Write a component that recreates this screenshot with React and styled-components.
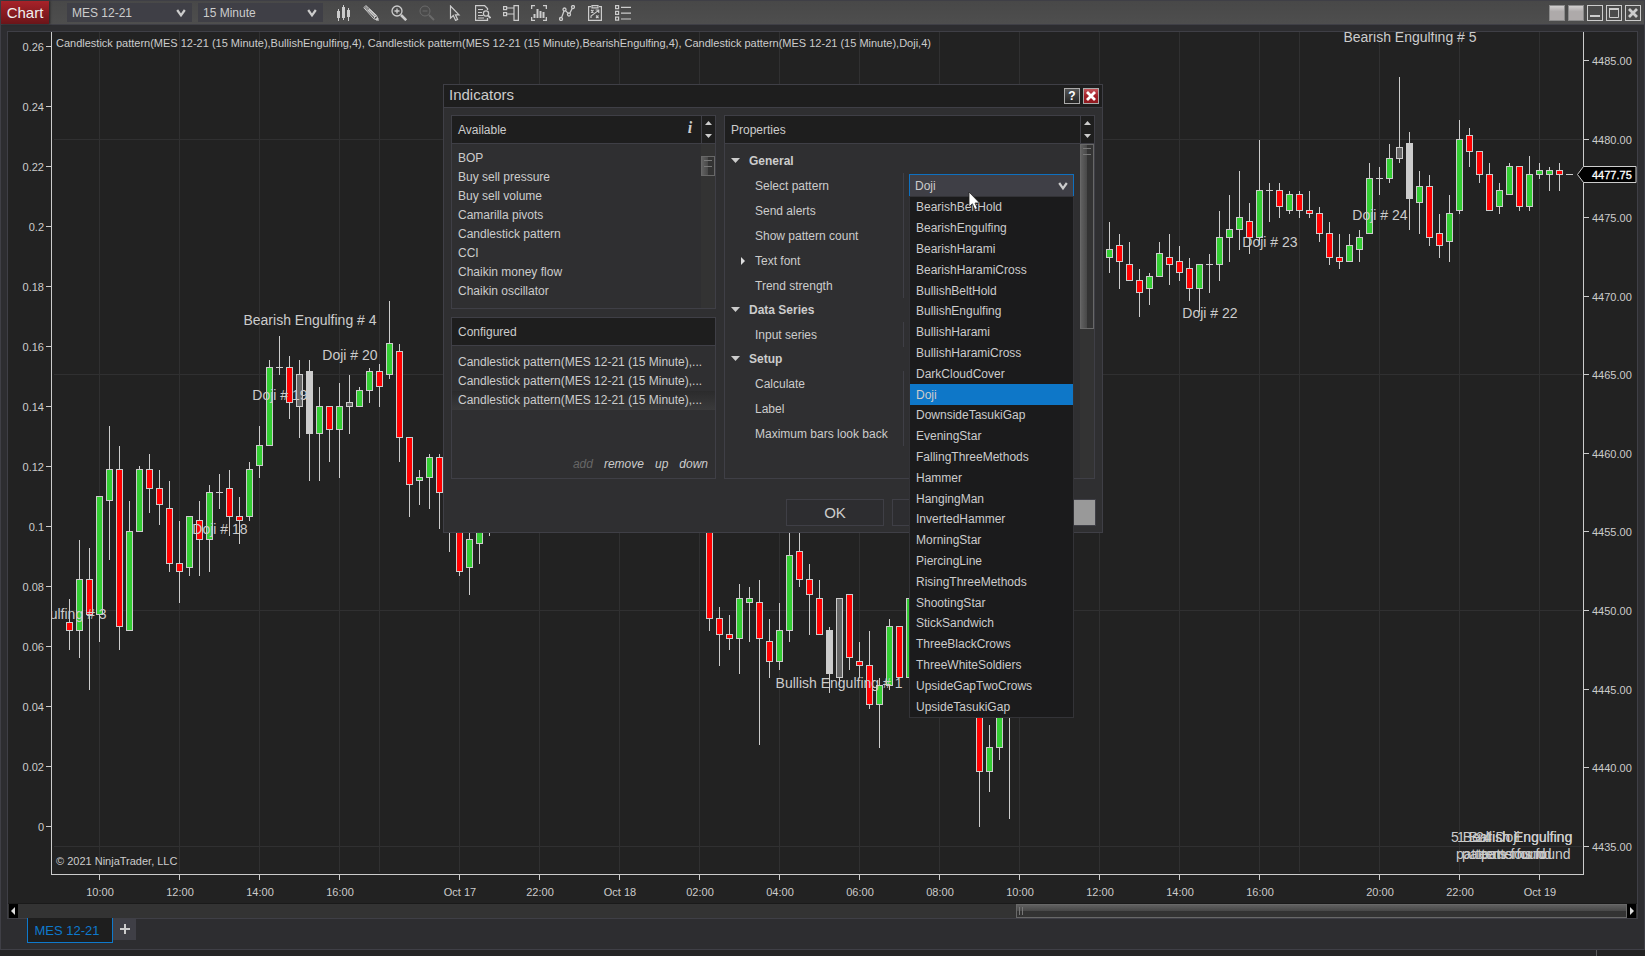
import React from 'react'
import styled, { createGlobalStyle, css } from 'styled-components'

const GlobalStyle = createGlobalStyle`
    * {
        box-sizing: border-box;
    }
    body {
        margin: 0;
        background: #222222;
        color: #cccccc;
        font-family: "Liberation Sans", Arial, sans-serif;
        font-size: 12px;
    }
    button, select, input {
        font: inherit;
        color: inherit;
        margin: 0;
        padding: 0;
        border: 0;
        border-radius: 0;
        background: none;
        appearance: none;
        outline: none;
    }
    svg {
        display: block;
    }
`;

// x, high, body top, body bottom, low, kind
// g = up, r = down, n = pattern outline, w = pattern filled, d = open equals close
const candles = [
    [69, 599, 622, 631, 650, 'r'], [79, 540, 579, 631, 658, 'g'], [89, 548, 579, 615, 690, 'r'],
    [99, 496, 496, 615, 642, 'g'], [109, 426, 469, 501, 560, 'g'], [119, 446, 469, 627, 650, 'r'],
    [129, 501, 531, 631, 631, 'g'], [139, 466, 469, 532, 532, 'g'], [149, 454, 469, 489, 513, 'r'],
    [159, 470, 488, 505, 525, 'r'], [169, 481, 508, 564, 572, 'r'], [179, 521, 563, 572, 603, 'r'],
    [189, 516, 516, 568, 576, 'g'], [199, 501, 520, 540, 576, 'r'], [209, 485, 492, 540, 572, 'g'],
    [219, 474, 492, 493, 509, 'd'], [229, 470, 488, 517, 536, 'r'], [239, 497, 516, 521, 544, 'r'],
    [249, 462, 469, 517, 521, 'g'], [259, 426, 445, 466, 478, 'g'], [269, 360, 367, 446, 446, 'g'],
    [279, 336, 367, 368, 375, 'd'], [289, 356, 367, 403, 419, 'r'], [299, 360, 374, 407, 438, 'n'],
    [309, 360, 371, 434, 481, 'w'], [319, 387, 406, 434, 481, 'g'], [329, 406, 406, 430, 462, 'r'],
    [339, 383, 406, 430, 478, 'g'], [349, 375, 402, 407, 434, 'n'], [359, 387, 390, 407, 407, 'g'],
    [369, 368, 371, 391, 403, 'g'], [379, 364, 371, 387, 407, 'r'], [389, 301, 343, 375, 379, 'g'],
    [399, 344, 351, 438, 462, 'r'], [409, 437, 437, 485, 517, 'r'], [419, 470, 477, 481, 505, 'g'],
    [429, 454, 457, 478, 509, 'g'], [439, 454, 457, 493, 529, 'r'], [449, 480, 490, 520, 552, 'r'],
    [459, 500, 510, 572, 576, 'r'], [469, 520, 539, 568, 595, 'g'], [479, 500, 510, 544, 564, 'g'],
    [489, 490, 500, 520, 536, 'g'],
    [709, 480, 490, 619, 631, 'r'], [719, 607, 618, 635, 666, 'r'], [729, 615, 634, 639, 650, 'r'],
    [739, 584, 598, 639, 674, 'g'], [749, 587, 598, 603, 642, 'g'], [759, 580, 602, 639, 745, 'r'],
    [769, 619, 641, 662, 678, 'r'], [779, 603, 630, 662, 670, 'g'], [789, 500, 555, 631, 642, 'g'],
    [799, 500, 551, 580, 587, 'r'], [809, 564, 579, 595, 635, 'r'], [819, 580, 598, 635, 635, 'r'],
    [829, 627, 630, 674, 693, 'w'], [839, 598, 598, 678, 685, 'n'], [849, 594, 594, 658, 670, 'r'],
    [859, 642, 661, 666, 678, 'r'], [869, 631, 665, 705, 709, 'r'], [879, 678, 685, 705, 748, 'g'],
    [889, 619, 626, 686, 690, 'g'], [899, 626, 626, 678, 678, 'r'], [909, 591, 598, 678, 678, 'g'],
    [979, 690, 700, 772, 827, 'r'], [989, 725, 747, 772, 792, 'g'], [999, 690, 700, 748, 760, 'g'],
    [1009, 690, 700, 710, 819, 'r'],
    [1109, 222, 249, 258, 273, 'g'], [1119, 234, 245, 262, 289, 'r'], [1129, 242, 264, 281, 281, 'r'],
    [1139, 269, 280, 293, 317, 'r'], [1149, 273, 276, 289, 305, 'g'], [1159, 242, 253, 277, 277, 'g'],
    [1169, 234, 257, 265, 285, 'r'], [1179, 246, 261, 273, 281, 'r'], [1189, 258, 268, 289, 301, 'r'],
    [1199, 264, 264, 289, 312, 'g'], [1209, 254, 264, 265, 293, 'd'], [1219, 211, 237, 265, 281, 'g'],
    [1229, 195, 229, 238, 262, 'g'], [1239, 171, 217, 230, 250, 'g'], [1249, 203, 221, 238, 254, 'r'],
    [1259, 140, 190, 238, 245, 'g'], [1269, 183, 190, 191, 222, 'd'], [1279, 183, 190, 207, 218, 'r'],
    [1289, 191, 194, 211, 214, 'g'], [1299, 191, 194, 211, 218, 'r'], [1309, 191, 210, 214, 218, 'r'],
    [1319, 207, 213, 234, 242, 'r'], [1329, 222, 233, 258, 265, 'r'], [1339, 234, 257, 262, 269, 'r'],
    [1349, 234, 245, 262, 262, 'g'], [1359, 230, 237, 250, 262, 'g'], [1369, 163, 178, 234, 234, 'g'],
    [1379, 167, 178, 179, 195, 'd'], [1389, 144, 158, 179, 183, 'g'], [1399, 77, 147, 159, 163, 'n'],
    [1409, 132, 143, 199, 230, 'w'], [1419, 171, 186, 203, 234, 'g'], [1429, 175, 186, 238, 246, 'r'],
    [1439, 214, 233, 246, 258, 'r'], [1449, 195, 213, 242, 262, 'g'], [1459, 120, 139, 211, 214, 'g'],
    [1469, 128, 135, 152, 167, 'r'], [1479, 151, 151, 175, 183, 'r'], [1489, 163, 174, 211, 211, 'r'],
    [1499, 183, 190, 207, 214, 'g'], [1509, 163, 166, 195, 195, 'g'], [1519, 166, 166, 207, 211, 'r'],
    [1529, 156, 174, 207, 211, 'g'], [1539, 163, 170, 175, 179, 'g'], [1549, 167, 170, 175, 191, 'g'],
    [1559, 163, 170, 175, 191, 'r'], [1569, 174, 174, 175, 175, 'd'],
];

const candleFill = { g: '#33cc33', r: '#ff0000', n: '#666666', w: '#cccccc' };

const times = [
    [99, '10:00'], [179, '12:00'], [259, '14:00'], [339, '16:00'], [379, ''], [459, 'Oct 17'],
    [539, '22:00'], [619, 'Oct 18'], [699, '02:00'], [779, '04:00'], [859, '06:00'],
    [939, '08:00'], [1019, '10:00'], [1099, '12:00'], [1179, '14:00'], [1259, '16:00'],
    [1299, ''], [1379, '20:00'], [1459, '22:00'], [1539, 'Oct 19'],
];

const prices = [
    [61, '4485.00'], [140, '4480.00'], [218, '4475.00'], [297, '4470.00'], [375, '4465.00'],
    [454, '4460.00'], [532, '4455.00'], [611, '4450.00'], [690, '4445.00'], [768, '4440.00'],
    [847, '4435.00'],
];

const ratios = ['0.26', '0.24', '0.22', '0.2', '0.18', '0.16', '0.14', '0.12', '0.1', '0.08', '0.06', '0.04', '0.02', '0'];

const notes = [
    [40, 619, 'Bearish Engulfing # 3'],
    [220, 534, 'Doji # 18'],
    [280, 400, 'Doji # 19'],
    [310, 325, 'Bearish Engulfing # 4'],
    [350, 360, 'Doji # 20'],
    [839, 688, 'Bullish Engulfing # 1'],
    [1210, 318, 'Doji # 22'],
    [1270, 247, 'Doji # 23'],
    [1380, 220, 'Doji # 24'],
    [1410, 42, 'Bearish Engulfing # 5'],
];

const totals = [
    [1451, '5 Bearish Engulfing'],
    [1457, '1 Bullish Engulfing'],
    [1476, '24 Doji'],
];

const available = ['BOP', 'Buy sell pressure', 'Buy sell volume', 'Camarilla pivots', 'Candlestick pattern', 'CCI', 'Chaikin money flow', 'Chaikin oscillator'];

const patterns = [
    'BearishBeltHold', 'BearishEngulfing', 'BearishHarami', 'BearishHaramiCross', 'BullishBeltHold',
    'BullishEngulfing', 'BullishHarami', 'BullishHaramiCross', 'DarkCloudCover', 'Doji',
    'DownsideTasukiGap', 'EveningStar', 'FallingThreeMethods', 'Hammer', 'HangingMan',
    'InvertedHammer', 'MorningStar', 'PiercingLine', 'RisingThreeMethods', 'ShootingStar',
    'StickSandwich', 'ThreeBlackCrows', 'ThreeWhiteSoldiers', 'UpsideGapTwoCrows', 'UpsideTasukiGap',
];

const Page = styled.div`
    position: relative;
    min-height: 100vh;
    display: flex;
    flex-direction: column;
    overflow: hidden;
`;

const Window = styled.div`
    background: #2d2d30;
    border: 1px solid #3f3f46;
`;

const TitleBar = styled.header`
    display: flex;
    align-items: center;
    height: 24px;
    padding-right: 3px;
    background: linear-gradient(#484848, #4e4e4e);
    border-bottom: 1px solid #3f3f46;
`;

const ChartMenu = styled.button`
    align-self: stretch;
    width: 48px;
    margin-right: 18px;
    background: linear-gradient(#a82229, #6b1519);
    color: #f0f0f0;
    font-size: 15px;
    box-shadow: 1px 0 2px #222222;
`;

const SelectBox = styled.div`
    position: relative;
    width: ${({ $width }) => $width};
    height: ${({ $height }) => $height};
    margin-right: ${({ $gap }) => $gap || 0};
    select {
        width: 100%;
        height: 100%;
        padding: 0 20px 0 5px;
        background: #3f3f46;
        border: ${({ $open }) => ($open ? '1px solid #0e70c0' : '0')};
    }
    svg {
        position: absolute;
        right: 6px;
        top: calc(50% - 5px);
        pointer-events: none;
    }
`;

const Tools = styled.div`
    display: flex;
    flex: 1;
    gap: 12px;
`;

const Tool = styled.button`
    width: 16px;
    height: 16px;
    color: ${({ disabled }) => (disabled ? '#6a6a6a' : '#cccccc')};
`;

const WindowButtons = styled.div`
    display: flex;
    gap: 3px;
`;

const WindowButton = styled.button`
    width: 16px;
    height: 16px;
    border: 1px solid #cccccc;
    ${({ $plain }) => $plain && css`
        border-color: #8a8a8a;
        background: linear-gradient(#d0cece, #aeaaaa 40%);
    `}
`;

const Panel = styled.main`
    margin: 6px 6px 0;
    background: #222222;
    border: 1px solid #3f3f46;
`;

const ChartSvg = styled.svg`
    width: 100%;
    height: auto;
    font-size: 11px;
    fill: #cccccc;
`;

const ScrollRow = styled.div`
    display: flex;
    height: 15px;
    padding: 0 1px;
    border-top: 1px solid #1a1a1a;
    background: #333333;
`;

const ScrollArrow = styled.button`
    display: grid;
    place-items: center;
    width: 9px;
    background: #000000;
`;

const ScrollTrack = styled.div`
    flex: 1;
`;

const ScrollThumb = styled.div`
    display: flex;
    align-items: center;
    gap: 2px;
    width: 38%;
    height: 14px;
    margin-left: auto;
    padding-left: 2px;
    border: 1px solid #686868;
    background: linear-gradient(#606060, #484848 49%, #333333 51%);
    &::before, &::after {
        content: '';
        width: 1px;
        height: 8px;
        background: #777777;
    }
`;

const Tabs = styled.nav`
    display: flex;
    align-items: flex-start;
    height: 31px;
    margin-top: -1px;
    padding-left: 26px;
`;

const Tab = styled.button`
    position: relative;
    width: 86px;
    height: 25px;
    padding-right: 6px;
    background: #1e1e1e;
    border: 1px solid #0e79cc;
    border-top: 0;
    color: #0e79cc;
    font-size: 13px;
`;

const AddTab = styled.button`
    position: relative;
    display: grid;
    place-items: center;
    width: 23px;
    height: 22px;
    background: #3f3f46;
`;

const StatusBar = styled.footer`
    flex: 1;
    min-height: 6px;
    margin-right: 48px;
    border-right: 1px solid #5a5a5a;
    background: #252526;
`;

const Dialog = styled.section`
    position: absolute;
    left: 443px;
    top: 84px;
    width: 660px;
    background: #2f2f31;
    border: 1px solid #3f3f46;
`;

const DialogTitle = styled.div`
    display: flex;
    align-items: center;
    gap: 3px;
    height: 23px;
    padding: 0 3px 0 5px;
    background: #1e1e1e;
    border-bottom: 1px solid #3f3f46;
    h1 {
        flex: 1;
        margin: 0;
        font-size: 15px;
        line-height: 20px;
        font-weight: 400;
        padding-bottom: 2px;
    }
`;

const DialogButton = styled.button`
    display: grid;
    place-items: center;
    width: 16px;
    height: 16px;
    border: 1px solid #aaaaaa;
    background: ${({ $close }) => ($close ? 'linear-gradient(#c4545a, #a31e26 50%, #8e1a20)' : 'linear-gradient(#555555, #222222)')};
    color: #ffffff;
    font-weight: 700;
`;

const Columns = styled.div`
    display: grid;
    grid-template-columns: 265px 1fr;
    gap: 8px;
    padding: 7px 7px 0;
`;

const LeftColumn = styled.div`
    display: flex;
    flex-direction: column;
    gap: 8px;
`;

const Box = styled.div`
    display: flex;
    flex-direction: column;
    height: ${({ $height }) => $height};
    border: 1px solid #3f3f46;
`;

const BoxHeader = styled.div`
    display: flex;
    align-items: center;
    height: 28px;
    flex: none;
    padding-left: 6px;
    background: #1e1e1e;
    border-bottom: 1px solid #3f3f46;
    h2 {
        flex: 1;
        margin: 0;
        font-size: 12px;
        font-weight: 400;
    }
`;

const InfoButton = styled.button`
    width: 22px;
    padding-bottom: 3px;
    font-family: "Liberation Serif", "Times New Roman", serif;
    font-size: 16px;
    font-style: italic;
    font-weight: 700;
`;

const Spinner = styled.div`
    display: flex;
    flex-direction: column;
    justify-content: space-between;
    align-items: center;
    align-self: stretch;
    width: 14px;
    padding: 4px 0;
    border-left: 1px solid #3f3f46;
`;

const BoxBody = styled.div`
    display: flex;
    flex: 1;
`;

const SideTrack = styled.div`
    width: 14px;
    padding-top: ${({ $top }) => $top || 0};
    background: #333333;
`;

const SideThumb = styled.div`
    height: ${({ $height }) => $height};
    padding: 3px 2px;
    border: 1px solid #686868;
    background: linear-gradient(90deg, #606060, #484848 49%, #333333 51%);
    &::before {
        content: '';
        display: block;
        height: 5px;
        border-top: 1px solid #777777;
        border-bottom: 1px solid #777777;
    }
`;

const List = styled.ul`
    flex: 1;
    margin: 0;
    padding: ${({ $top }) => $top} 0 0;
    list-style: none;
`;

const ListItem = styled.li`
    height: 19px;
    padding-left: 6px;
    line-height: 19px;
    white-space: nowrap;
    background: ${({ $selected }) => ($selected ? 'linear-gradient(#2b2b2c, #3a3a3b)' : 'none')};
`;

const Actions = styled.div`
    display: flex;
    justify-content: flex-end;
    gap: 11px;
    padding: 0 7px 6px;
    button {
        font-style: italic;
        line-height: 16px;
    }
    button:disabled {
        color: #666666;
    }
`;

const Properties = styled.div`
    flex: 1;
    padding-top: 5px;
`;

const GroupTitle = styled.h3`
    display: flex;
    align-items: center;
    gap: 9px;
    height: 24px;
    margin: 0;
    padding-left: 6px;
    font-size: 12px;
    font-weight: 700;
`;

const Group = styled.div`
    position: relative;
    width: 349px;
    &::after {
        content: '';
        position: absolute;
        left: 178px;
        top: 0;
        bottom: 0;
        border-left: 1px solid #3f3f46;
    }
`;

const PropertyRow = styled.div`
    display: flex;
    align-items: center;
    height: 25px;
    padding-left: 15px;
    label {
        display: flex;
        align-items: center;
        gap: 10px;
        flex: 1;
        margin-left: ${({ $nested }) => ($nested ? '0' : '15px')};
    }
`;

const Field = styled.input`
    width: 165px;
    height: 19px;
    background: #333337;
    border: 1px solid #434346;
`;

const DialogFooter = styled.div`
    display: flex;
    justify-content: flex-end;
    gap: 8px;
    padding: 20px 6px 6px;
`;

const DialogAction = styled.button`
    width: 98px;
    height: 27px;
    border: 1px solid #3f3f46;
    background: ${({ $light }) => ($light ? '#999999' : '#2d2d30')};
    font-size: 15px;
`;

const Popup = styled.ul`
    position: absolute;
    left: 465px;
    top: 111px;
    display: flex;
    flex-direction: column;
    width: 165px;
    height: 522px;
    margin: 0;
    padding: 0;
    list-style: none;
    background: #1b1b1c;
    border: 1px solid #333337;
`;

const PopupItem = styled.li`
    display: flex;
    flex: 1;
    align-items: center;
    padding-left: 6px;
    background: ${({ $selected }) => ($selected ? '#0e77c8' : 'none')};
`;

const Pointer = styled.svg`
    position: absolute;
    left: 524px;
    top: 106px;
`;

const Chevron = () => (
    <svg width="10" height="10" viewBox="0 0 10 10">
        <path d="M1.2 2 L5 7.4 L8.8 2" fill="none" stroke="#ccc" strokeWidth="2.2" />
    </svg>
)

const Triangle = ({ dir }) => {
    const paths = {
        up: 'M0 5 L3.5 1 L7 5 Z',
        down: 'M0 1 L7 1 L3.5 5 Z',
    };
    return <svg width="7" height="6" viewBox="0 0 7 6"><path d={paths[dir]} fill="#ccc" /></svg>
}

const SideArrow = ({ left }) => (
    <svg width="5" height="8" viewBox="0 0 5 8">
        <path d={left ? 'M4 0 V8 L0 4 Z' : 'M1 0 V8 L5 4 Z'} fill="#ddd" />
    </svg>
)

const Expander = () => (
    <svg width="9" height="6" viewBox="0 0 9 6"><path d="M0 0 H9 L4.5 5 Z" fill="#ccc" /></svg>
)

const tools = [
    ['Chart style', <g fill="currentColor"><path d="M2 6h3v7H2zM7 2h3v11H7zM12 5h3v7h-3z" /><path d="M3 4h1v12H3zM8 0h1v15H8zM13 3h1v13h-1z" /></g>],
    ['Drawing tools', <g fill="none" stroke="currentColor"><path d="M.8 2.6 L3 .6 L13.6 10.6 L15.4 15.4 L10.6 13.6 Z M1.8 3.6 L4 1.6 M2.8 4.6 L5 2.6 M10.6 13.4 L13.4 10.6" /><path d="M4.4 4.4 L12 12 M6 4 L13 10.6" strokeWidth="1.4" /><path d="M13 15 L15 13" strokeWidth="2" /></g>],
    ['Zoom in', <g fill="none" stroke="currentColor"><circle cx="6" cy="6" r="5" strokeWidth="1.3" /><path d="M3.5 6h5M6 3.5v5" strokeWidth="1.3" /><path d="M10 10 L15.2 15.2" strokeWidth="2.6" /></g>],
    ['Zoom out', <g fill="none" stroke="currentColor"><circle cx="6" cy="6" r="5" /><path d="M3.5 6h5" /><path d="M10 10 L15 15" strokeWidth="2" /></g>],
    ['Cursor', <path d="M3.5 1 V13.2 L6.3 10.6 L8.6 15.4 L10.6 14.5 L8.4 9.8 H12 Z" fill="none" stroke="currentColor" strokeWidth="1.2" />],
    ['Data box', <g fill="none" stroke="currentColor"><path d="M12.5 5 V3.5 L9.5 .5 H.5 V15.5 H12.5 V13" strokeWidth="1.3" /><path d="M3 4.5h5M3 7.5h4M3 10.5h5M3 13h6" /><circle cx="11" cy="8.5" r="2.6" strokeWidth="1.3" /><path d="M13 10.5 L15.6 13" strokeWidth="1.8" /></g>],
    ['Chart trader', <g fill="none" stroke="currentColor" strokeWidth="1.2"><path d="M.6 1.6h3v3h-3zM.6 7.6h3v3h-3zM11 .6h4.4v14.8H11zM4 3h7M4 9h7" /></g>],
    ['Indicators', <g fill="currentColor"><path d="M0 0h4v1.3H1.3V4H0zM12 0h4v4h-1.3V1.3H12zM0 12h1.3v2.7H4V16H0zM14.7 12H16v4h-4v-1.3h2.7z" /><path d="M2.5 9h2v4h-2zM5.5 4h2v9h-2zM8.5 6h2v7h-2zM11.5 7h2v6h-2z" /></g>],
    ['Strategies', <g fill="none" stroke="currentColor" strokeWidth="1.3"><circle cx="2" cy="14" r="1.5" /><circle cx="5.5" cy="4.5" r="1.5" /><circle cx="10" cy="9.5" r="1.5" /><circle cx="14" cy="2" r="1.5" /><path d="M2.6 12.6 L5 6M6.5 5.6 L9.2 8.4M10.8 8.2 L13.2 3.4" /></g>],
    ['Strategy analyzer', <g fill="none" stroke="currentColor" strokeWidth="1.2"><path d="M4 1.6H1.6v13.8h12.8V1.6H12M5 .6h6v2.2H5z" /><path d="M4 5 L6.5 7.5M6.5 5 L4 7.5M9 10.5 L11.5 13M11.5 10.5 L9 13M4 13V11L11.6 5.4M8.6 5h3.2v3" strokeWidth="1.1" /></g>],
    ['Properties', <g fill="none" stroke="currentColor" strokeWidth="1.2"><path d="M.6 .6h3v3h-3zM.6 6.4h3v3h-3zM.6 12.2h3v3h-3zM6 2.4h10M6 8.2h10M6 14h10" /></g>],
];

const Candle = ({ x, high, top, bottom, low, kind }) => (
    <g shapeRendering="crispEdges">
        <rect x={x} y={high} width="1" height={low - high} fill="#ccc" />
        {kind === 'd'
            ? <rect x={x - 3} y={top} width="7" height="1" fill="#ccc" />
            : <rect x={x - 2.5} y={top + 0.5} width="6" height={bottom - top - 1} fill={candleFill[kind]} stroke="#ccc" />}
    </g>
)

const PriceChart = () => (
    <ChartSvg viewBox="8 32 1629 871">
        <clipPath id="plot"><rect x="52" y="32" width="1531" height="842" /></clipPath>
        <g fill="#303031" shapeRendering="crispEdges">
            {times.map(([x]) => <rect key={x} x={x} y="32" width="1" height="840" />)}
            {[139, 374, 610, 846].map((y) => <rect key={y} x="54" y={y} width="1528" height="1" />)}
        </g>
        <g shapeRendering="crispEdges">
            <rect x="51" y="32" width="1" height="843" />
            <rect x="1583" y="32" width="1" height="843" />
            <rect x="51" y="874" width="1533" height="1" />
            {times.filter((t) => t[1]).map(([x]) => <rect key={x} x={x} y="875" width="1" height="5" />)}
            {ratios.map((r, i) => <rect key={r} x="46" y={46 + i * 60} width="5" height="1" />)}
            {prices.map(([y]) => <rect key={y} x="1584" y={y - 1} width="5" height="1" />)}
        </g>
        {candles.map(([x, high, top, bottom, low, kind]) => (
            <Candle key={x} x={x} high={high} top={top} bottom={bottom} low={low} kind={kind} />
        ))}
        <g textAnchor="middle">
            {times.map(([x, label]) => label && <text key={x} x={x + 1} y="896">{label}</text>)}
        </g>
        <g textAnchor="end">
            {ratios.map((r, i) => <text key={r} x="44" y={51 + i * 60}>{r}</text>)}
        </g>
        {prices.map(([y, label]) => <text key={y} x="1592" y={y + 4}>{label}</text>)}
        <g fontSize="14" textAnchor="middle" clipPath="url(#plot)">
            {notes.map(([x, y, label]) => <text key={label} x={x} y={y}>{label}</text>)}
        </g>
        <g fontSize="14">
            {totals.map(([x, label]) => (
                <React.Fragment key={label}>
                    <text x={x} y="842">{label}</text>
                    <text x={x + 5} y="859">patterns found</text>
                </React.Fragment>
            ))}
        </g>
        <text x="56" y="47">Candlestick pattern(MES 12-21 (15 Minute),BullishEngulfing,4), Candlestick pattern(MES 12-21 (15 Minute),BearishEngulfing,4), Candlestick pattern(MES 12-21 (15 Minute),Doji,4)</text>
        <text x="56" y="865">© 2021 NinjaTrader, LLC</text>
        <path d="M1577.5 174.5 L1583.5 166.5 H1636 V182.5 H1583.5 Z" fill="#000" stroke="#ccc" />
        <text x="1592" y="179" fill="#fff" stroke="#fff" strokeWidth="0.3">4477.75</text>
    </ChartSvg>
)

const Property = ({ id, label, nested }) => (
    <PropertyRow $nested={nested}>
        <label htmlFor={id}>{nested && <SideArrow />}{label}</label>
        <Field id={id} />
    </PropertyRow>
)

const IndicatorsDialog = () => (
    <Dialog role="dialog" aria-labelledby="dialog-title">
        <DialogTitle>
            <h1 id="dialog-title">Indicators</h1>
            <DialogButton aria-label="Help">?</DialogButton>
            <DialogButton $close aria-label="Close">
                <svg width="10" height="10" viewBox="0 0 10 10"><path d="M1 1 L9 9M9 1 L1 9" stroke="#fff" strokeWidth="2.8" /></svg>
            </DialogButton>
        </DialogTitle>
        <Columns>
            <LeftColumn>
                <Box $height="194px">
                    <BoxHeader>
                        <h2>Available</h2>
                        <InfoButton aria-label="Info">i</InfoButton>
                        <Spinner><Triangle dir="up" /><Triangle dir="down" /></Spinner>
                    </BoxHeader>
                    <BoxBody>
                        <List $top="5px">
                            {available.map((name) => <ListItem key={name}>{name}</ListItem>)}
                        </List>
                        <SideTrack $top="12px"><SideThumb $height="20px" /></SideTrack>
                    </BoxBody>
                </Box>
                <Box $height="162px">
                    <BoxHeader><h2>Configured</h2></BoxHeader>
                    <List $top="7px">
                        {[0, 1, 2].map((i) => (
                            <ListItem key={i} $selected={i === 2}>Candlestick pattern(MES 12-21 (15 Minute),...</ListItem>
                        ))}
                    </List>
                    <Actions>
                        <button disabled>add</button>
                        <button>remove</button>
                        <button>up</button>
                        <button>down</button>
                    </Actions>
                </Box>
            </LeftColumn>
            <Box $height="364px">
                <BoxHeader>
                    <h2>Properties</h2>
                    <Spinner><Triangle dir="up" /><Triangle dir="down" /></Spinner>
                </BoxHeader>
                <BoxBody>
                    <Properties>
                        <GroupTitle><Expander />General</GroupTitle>
                        <Group>
                            <PropertyRow>
                                <label htmlFor="pattern">Select pattern</label>
                                <SelectBox $width="165px" $height="23px" $open>
                                    <select id="pattern" defaultValue="Doji"><option>Doji</option></select>
                                    <Chevron />
                                </SelectBox>
                            </PropertyRow>
                            <Property id="alerts" label="Send alerts" />
                            <Property id="count" label="Show pattern count" />
                            <Property id="font" label="Text font" nested />
                            <Property id="trend" label="Trend strength" />
                        </Group>
                        <GroupTitle><Expander />Data Series</GroupTitle>
                        <Group>
                            <Property id="series" label="Input series" />
                        </Group>
                        <GroupTitle><Expander />Setup</GroupTitle>
                        <Group>
                            <Property id="calculate" label="Calculate" />
                            <Property id="label" label="Label" />
                            <Property id="lookback" label="Maximum bars look back" />
                        </Group>
                    </Properties>
                    <SideTrack><SideThumb $height="185px" /></SideTrack>
                </BoxBody>
            </Box>
        </Columns>
        <DialogFooter>
            <DialogAction>OK</DialogAction>
            <DialogAction aria-label="Cancel" />
            <DialogAction $light aria-label="Apply" />
        </DialogFooter>
        <Popup role="listbox">
            {patterns.map((name) => (
                <PopupItem key={name} role="option" aria-selected={name === 'Doji'} $selected={name === 'Doji'}>{name}</PopupItem>
            ))}
        </Popup>
        <Pointer width="13" height="20" viewBox="0 0 13 20">
            <path d="M1 1 V16 L4.4 12.8 L6.8 18.6 L9.4 17.4 L7 12 H11.6 Z" fill="#fff" stroke="#222" strokeWidth="0.8" />
        </Pointer>
    </Dialog>
)

const App = () => {
    return (
        <Page>
            <GlobalStyle />
            <Window>
                <TitleBar>
                    <ChartMenu>Chart</ChartMenu>
                    <SelectBox $width="125px" $height="19px" $gap="6px">
                        <select aria-label="Instrument"><option>MES 12-21</option></select>
                        <Chevron />
                    </SelectBox>
                    <SelectBox $width="125px" $height="19px" $gap="12px">
                        <select aria-label="Interval"><option>15 Minute</option></select>
                        <Chevron />
                    </SelectBox>
                    <Tools>
                        {tools.map(([name, icon]) => (
                            <Tool key={name} aria-label={name} disabled={name === 'Zoom out'}>
                                <svg width="16" height="16" viewBox="0 0 16 16">{icon}</svg>
                            </Tool>
                        ))}
                    </Tools>
                    <WindowButtons>
                        <WindowButton $plain aria-label="Instrument link" />
                        <WindowButton $plain aria-label="Interval link" />
                        <WindowButton aria-label="Minimize">
                            <svg width="14" height="14"><rect x="2" y="9" width="10" height="2" fill="#ccc" /></svg>
                        </WindowButton>
                        <WindowButton aria-label="Maximize">
                            <svg width="14" height="14"><path d="M2.5 3 V11.5 H11.5 V3" fill="none" stroke="#ccc" /><rect x="2" y="2" width="10" height="2" fill="#ccc" /></svg>
                        </WindowButton>
                        <WindowButton aria-label="Close window">
                            <svg width="14" height="14"><path d="M3 3 L11 11M11 3 L3 11" stroke="#ccc" strokeWidth="2.8" /></svg>
                        </WindowButton>
                    </WindowButtons>
                </TitleBar>
                <Panel>
                    <PriceChart />
                    <ScrollRow>
                        <ScrollArrow aria-label="Scroll left"><SideArrow left /></ScrollArrow>
                        <ScrollTrack><ScrollThumb /></ScrollTrack>
                        <ScrollArrow aria-label="Scroll right"><SideArrow /></ScrollArrow>
                    </ScrollRow>
                </Panel>
                <Tabs>
                    <Tab>MES 12-21</Tab>
                    <AddTab aria-label="Add tab">
                        <svg width="10" height="10"><path d="M5 0V10M0 5H10" stroke="#ccc" strokeWidth="2" /></svg>
                    </AddTab>
                </Tabs>
            </Window>
            <StatusBar />
            <IndicatorsDialog />
        </Page>
    )
}

export default App;
